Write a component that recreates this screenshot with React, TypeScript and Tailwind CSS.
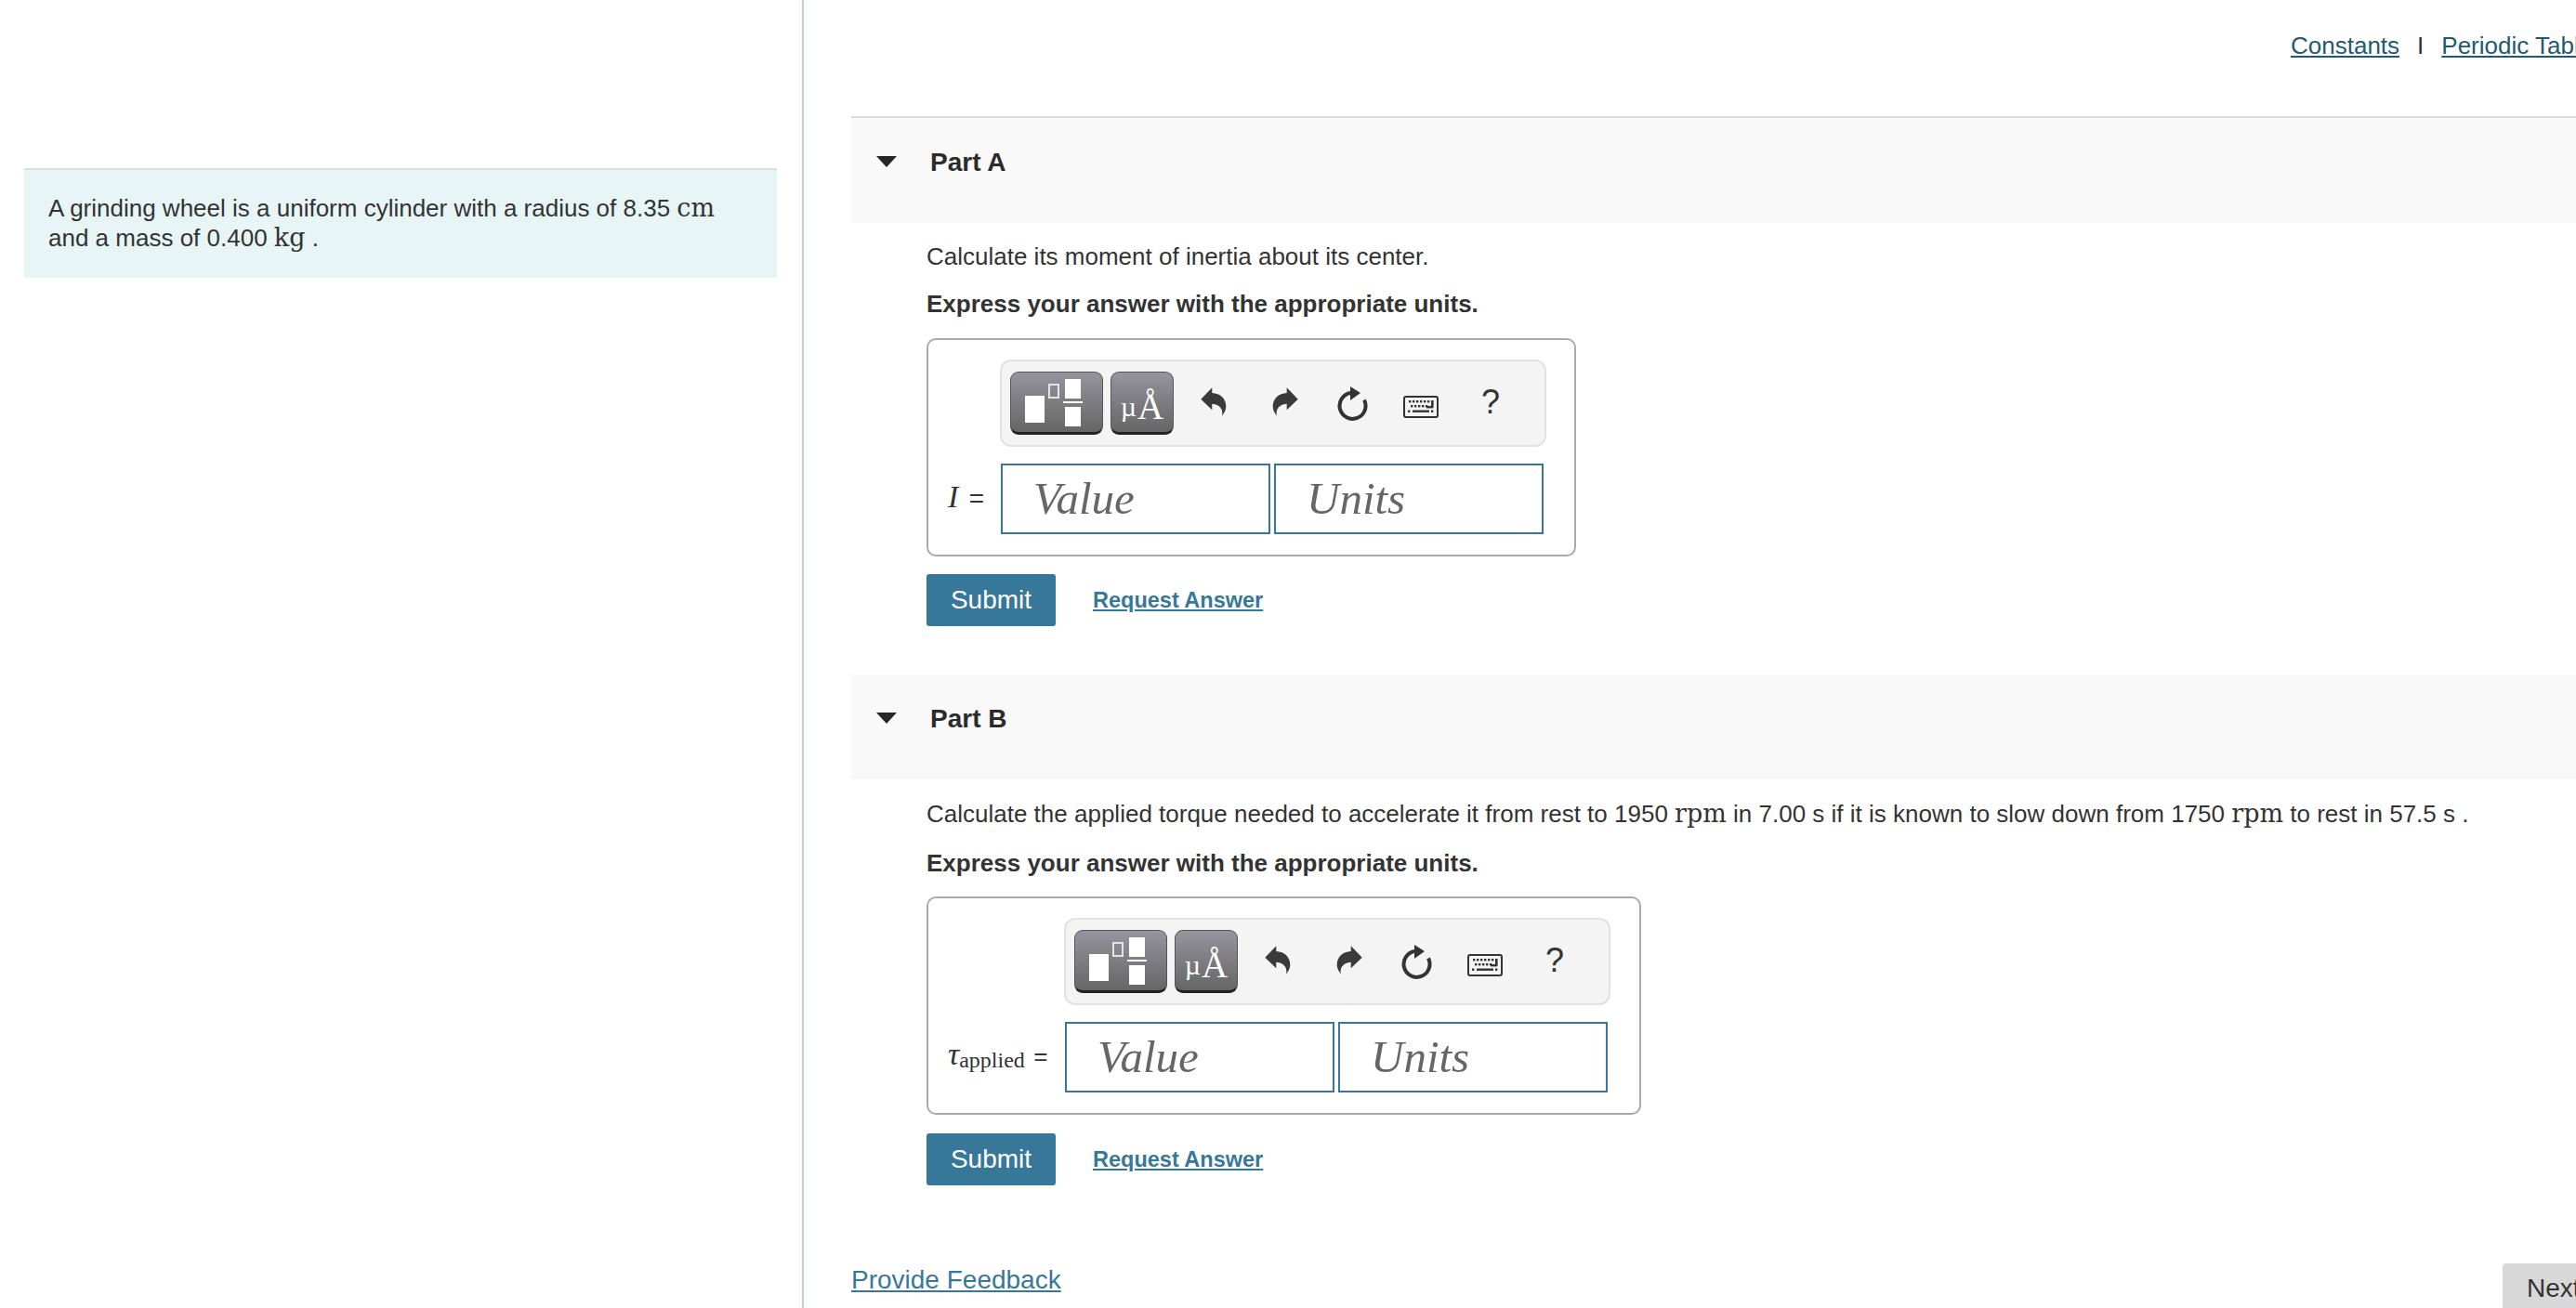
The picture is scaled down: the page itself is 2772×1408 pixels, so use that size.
import React from "react";

const sans = "font-['Liberation_Sans',Arial,sans-serif]";

function M({ children }: { children: React.ReactNode }) {
  return <span className="font-['DejaVu_Serif',serif] text-[27px] leading-none">{children}</span>;
}

function TemplateIcon() {
  return (
    <svg width="100" height="68" viewBox="0 0 100 68" className="block">
      <rect x="15" y="25" width="21" height="29" fill="#fff" />
      <rect x="41" y="13" width="10" height="14" fill="none" stroke="#e4e4e6" strokeWidth="2" />
      <rect x="58" y="7" width="17" height="21" fill="#fff" />
      <rect x="56" y="31" width="21" height="2" fill="#fff" />
      <rect x="58" y="37" width="17" height="21" fill="#fff" />
    </svg>
  );
}

function ArrowIcon({ flip, className }: { flip?: boolean; className: string }) {
  return (
    <svg width="28" height="31" viewBox="0 0 28 31" className={className}>
      <path
        transform={flip ? "translate(28 0) scale(-1 1)" : undefined}
        d="M0.3 12.7 L12.3 0.3 V6 C21 6.5 27.5 12 27.3 21 C27.2 25 25 28 23 30.7 C24.5 25 22 18.5 12.3 17.7 V24.3 Z"
        fill="#3a3a3a"
      />
    </svg>
  );
}

function ReloadIcon() {
  return (
    <svg width="34" height="37" viewBox="0 0 34 37" className="block">
      <path d="M14.5 7 A14 14 0 1 0 29 14.5" fill="none" stroke="#333" strokeWidth="4" />
      <path d="M14 0 L25 7 L14 15 Z" fill="#333" />
    </svg>
  );
}

function KeyboardIcon() {
  const top = [6, 10, 14, 18, 22, 26];
  const mid = [8, 12, 16, 20, 24];
  return (
    <svg width="38" height="24" viewBox="0 0 38 24" className="block">
      <rect x="1" y="1" width="36" height="22" rx="2" fill="#f5f5f5" stroke="#333" strokeWidth="2" />
      {top.map((x) => <rect key={x} x={x} y="5" width="2.4" height="2.4" fill="#333" />)}
      {mid.map((x) => <rect key={x} x={x} y="10" width="2.4" height="2.4" fill="#333" />)}
      <rect x="30" y="5" width="2.6" height="8" fill="#333" />
      <rect x="25" y="11" width="7" height="2.4" fill="#333" />
      <rect x="5" y="15.5" width="2.4" height="2.4" fill="#333" />
      <rect x="10" y="15.5" width="18" height="2.4" fill="#333" />
      <rect x="30" y="15.5" width="2.4" height="2.4" fill="#333" />
    </svg>
  );
}

function Toolbar() {
  const btn =
    "h-[68px] shrink-0 rounded-[9px] border border-[#555] border-b-[3px] border-b-[#222] bg-gradient-to-b from-[#96949e] to-[#666666]";
  return (
    <div className="flex h-[94px] w-[588px] items-center rounded-[12px] border-2 border-[#e2e2e2] bg-[#f4f4f4] pl-[9px]">
      <div className={`${btn} w-[100px]`}>
        <TemplateIcon />
      </div>
      <div className={`${btn} ml-[8px] flex w-[68px] items-end justify-center pb-[6px] font-['Liberation_Serif',serif] text-[39px] leading-[42px] text-white`}>
        <span className="mr-[1px] text-[30px]">µ</span>Å
      </div>
      <ArrowIcon className="ml-[29px] mt-[-3px] block shrink-0" />
      <ArrowIcon flip className="ml-[49px] mt-[-3px] block shrink-0" />
      <div className="ml-[42px]"><ReloadIcon /></div>
      <div className="ml-[37px] mt-[8px]"><KeyboardIcon /></div>
      <span className="ml-[46px] mt-[-2px] text-[36px] font-['Liberation_Sans',sans-serif] leading-none text-[#333]">?</span>
    </div>
  );
}

function Field({ placeholder }: { placeholder: string }) {
  return (
    <div className="flex h-[76px] w-[290px] items-center border-2 border-[#37789a] bg-white pl-[33px] font-['Liberation_Serif',serif] text-[49px] italic text-[#666]">
      {placeholder}
    </div>
  );
}

function Answer({ width, indent, labelWidth, label }: { width: string; indent: string; labelWidth: string; label: React.ReactNode }) {
  return (
    <div className={`${width} h-[235px] rounded-[10px] border-2 border-[#aaa] pt-[21px]`}>
      <div className={indent}><Toolbar /></div>
      <div className="mt-[18px] flex items-center">
        <div className={`${labelWidth} flex h-[76px] items-center whitespace-nowrap pb-[3px] pl-[21px] font-['Liberation_Serif',serif] text-[#333]`}>
          {label}
        </div>
        <Field placeholder="Value" />
        <div className="w-[4px]" />
        <Field placeholder="Units" />
      </div>
    </div>
  );
}

function Actions({ top }: { top: string }) {
  return (
    <div className={`${top} flex items-center`}>
      <div className="flex h-[56px] w-[139px] items-center justify-center rounded-[3px] bg-[#37789a] text-[28px] text-white">
        Submit
      </div>
      <a className="ml-[40px] text-[23.5px] font-bold text-[#37789a] underline">Request Answer</a>
    </div>
  );
}

function PartHeader({ title }: { title: string }) {
  return (
    <div className="flex h-[113px] items-start bg-[#f9f9f9] pl-[27px] pt-[32px]">
      <svg width="22" height="12" viewBox="0 0 22 12" className="mt-[9px] block">
        <path d="M0 0 H22 L11 12 Z" fill="#262626" />
      </svg>
      <span className="ml-[36px] text-[28px] font-bold leading-[32px] text-[#2b2b2b]">{title}</span>
    </div>
  );
}

export default function App() {
  return (
    <div className={`${sans} flex h-[1408px] w-[2772px] overflow-hidden bg-white text-[26px] leading-[32px] text-[#333]`}>
      <div className="h-full w-[865px] shrink-0 border-r-2 border-[#bccddf] pl-[26px] pt-[181px]">
        <div className="h-[118px] w-[810px] border-t-2 border-[#dddddd] bg-[#e8f5f7] px-[26px] pt-[25px]">
          A grinding wheel is a uniform cylinder with a radius of 8.35 <M>cm</M>
          <br />
          and a mass of 0.400 <M>kg</M> .
        </div>
      </div>

      <div className="w-[1950px] shrink-0 pl-[51px]">
        <div className="flex h-[125px] items-start whitespace-nowrap pl-[1549px] pt-[33px]">
          <a className="text-[#1f5a72] underline">Constants</a>
          <span className="ml-[19px]">I</span>
          <a className="ml-[19px] text-[#1f5a72] underline">Periodic Table</a>
        </div>

        <div className="border-t-2 border-[#dddddd]">
          <PartHeader title="Part A" />
        </div>
        <div className="pl-[81px]">
          <p className="mt-[20px]">Calculate its moment of inertia about its center.</p>
          <p className="mt-[19px] font-bold">Express your answer with the appropriate units.</p>
          <div className="mt-[21px]">
            <Answer
              width="w-[699px]"
              indent="ml-[77px]"
              labelWidth="w-[78px]"
              label={
                <span className="text-[34px]">
                  <i>I</i> <span className="ml-[3px] font-['Liberation_Sans',sans-serif] text-[28px]">=</span>
                </span>
              }
            />
          </div>
          <Actions top="mt-[19px]" />
        </div>

        <div className="mt-[52px]">
          <PartHeader title="Part B" />
        </div>
        <div className="pl-[81px]">
          <p className="mt-[21px] whitespace-nowrap">
            Calculate the applied torque needed to accelerate it from rest to 1950 <M>rpm</M> in 7.00 s if it is known to slow down from 1750 <M>rpm</M> to rest in 57.5 s .
          </p>
          <p className="mt-[21px] font-bold">Express your answer with the appropriate units.</p>
          <div className="mt-[20px]">
            <Answer
              width="w-[769px]"
              indent="ml-[146px]"
              labelWidth="w-[147px]"
              label={
                <span className="text-[34px]">
                  <i>τ</i>
                  <span className="relative top-[3px] text-[24px]">applied</span>{" "}
                  <span className="ml-[1px] font-['Liberation_Sans',sans-serif] text-[26px]">=</span>
                </span>
              }
            />
          </div>
          <Actions top="mt-[20px]" />
        </div>

        <div className="mt-[73px] flex items-start justify-between">
          <a className="mt-[13px] text-[28px] text-[#37789a] underline">Provide Feedback</a>
          <div className="mr-[-11px] mt-[11px] h-[60px] w-[133px] rounded-t-[4px] bg-[#d8d8d8] pl-[26px] pt-[11px] text-[28px]">Next</div>
        </div>
      </div>
    </div>
  );
}
